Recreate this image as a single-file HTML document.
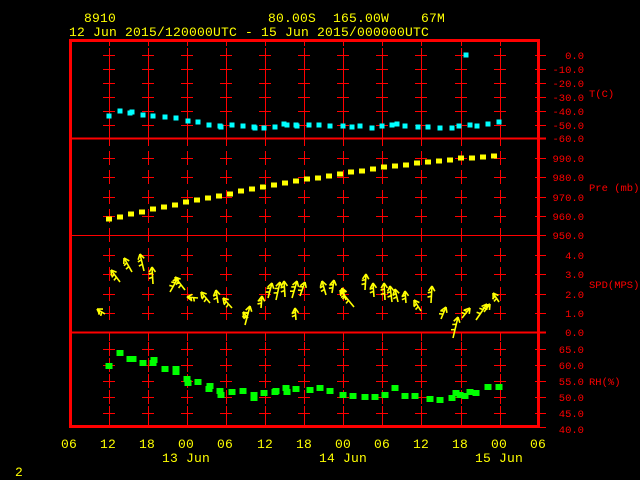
<!DOCTYPE html>
<html><head><meta charset="utf-8"><style>
html,body{margin:0;padding:0;background:#000;}
svg{display:block}
.y{fill:#ffff00;font-family:"Liberation Mono",monospace;font-size:13px;letter-spacing:0.2px}
.r{fill:#ff0000;font-family:"Liberation Mono",monospace;font-size:10.5px}
</style></head><body>
<svg id="s" width="640" height="480" viewBox="0 0 640 480" xmlns="http://www.w3.org/2000/svg">
<rect width="640" height="480" fill="#000"/>
<text class="y" x="84" y="22">8910</text>
<text class="y" x="268" y="22">80.00S</text>
<text class="y" x="333" y="22">165.00W</text>
<text class="y" x="421" y="22">67M</text>
<text class="y" x="69" y="36">12 Jun 2015/120000UTC - 15 Jun 2015/000000UTC</text>
<g id="grid" stroke="#ff0000" stroke-width="1" shape-rendering="crispEdges"></g>
<g fill="none" stroke="#ff0000" shape-rendering="crispEdges">
<rect x="70.5" y="40.5" width="468" height="386" stroke-width="3"/>
<line x1="70" y1="138.5" x2="546" y2="138.5" stroke-width="2"/>
<line x1="70" y1="235.5" x2="546" y2="235.5" stroke-width="1"/>
<line x1="70" y1="332.5" x2="546" y2="332.5" stroke-width="2"/>
</g>
<g text-anchor="end">
<text class="r" x="584" y="59">0.0</text>
<text class="r" x="584" y="73">-10.0</text>
<text class="r" x="584" y="87">-20.0</text>
<text class="r" x="584" y="101">-30.0</text>
<text class="r" x="584" y="115">-40.0</text>
<text class="r" x="584" y="129">-50.0</text>
<text class="r" x="584" y="142">-60.0</text>
<text class="r" x="584" y="162">990.0</text>
<text class="r" x="584" y="181">980.0</text>
<text class="r" x="584" y="201">970.0</text>
<text class="r" x="584" y="220">960.0</text>
<text class="r" x="584" y="239">950.0</text>
<text class="r" x="584" y="259">4.0</text>
<text class="r" x="584" y="278">3.0</text>
<text class="r" x="584" y="298">2.0</text>
<text class="r" x="584" y="317">1.0</text>
<text class="r" x="584" y="336">0.0</text>
<text class="r" x="584" y="353">65.0</text>
<text class="r" x="584" y="369">60.0</text>
<text class="r" x="584" y="385">55.0</text>
<text class="r" x="584" y="401">50.0</text>
<text class="r" x="584" y="417">45.0</text>
<text class="r" x="584" y="433">40.0</text>
</g>
<text class="r" x="589" y="97">T(C)</text>
<text class="r" x="589" y="191">Pre (mb)</text>
<text class="r" x="589" y="288">SPD(MPS)</text>
<text class="r" x="589" y="385">RH(%)</text>
<g text-anchor="middle">
<text class="y" x="69" y="448">06</text>
<text class="y" x="108" y="448">12</text>
<text class="y" x="147" y="448">18</text>
<text class="y" x="186" y="448">00</text>
<text class="y" x="225" y="448">06</text>
<text class="y" x="265" y="448">12</text>
<text class="y" x="304" y="448">18</text>
<text class="y" x="343" y="448">00</text>
<text class="y" x="382" y="448">06</text>
<text class="y" x="421" y="448">12</text>
<text class="y" x="460" y="448">18</text>
<text class="y" x="499" y="448">00</text>
<text class="y" x="538" y="448">06</text>
<text class="y" x="186" y="462">13 Jun</text>
<text class="y" x="343" y="462">14 Jun</text>
<text class="y" x="499" y="462">15 Jun</text>
</g>
<text class="y" x="15" y="476">2</text>
<g id="data" shape-rendering="crispEdges"></g>
<g id="wind" stroke="#ffff00" stroke-width="1.6" fill="none"></g>
</svg>
<script>
var NS="http://www.w3.org/2000/svg";
function el(p,t,a){var e=document.createElementNS(NS,t);for(var k in a)e.setAttribute(k,a[k]);p.appendChild(e);return e;}
var g=document.getElementById('grid');
var xs=[];for(var i=1;i<12;i++)xs.push(Math.round(69.5+i*39.1));
var rows=[55,69,83,97,111,125,158,177,197,216,235,255,274,294,313,349,365,381,397,413];
xs.forEach(function(x){
 rows.forEach(function(y){el(g,'line',{x1:x-6,y1:y+.5,x2:x+6,y2:y+.5});el(g,'line',{x1:x+.5,y1:y-7,x2:x+.5,y2:y+7});});
 [[118,138],[332,341],[41,46],[420,427],[138,146]].forEach(function(s){el(g,'line',{x1:x+.5,y1:s[0],x2:x+.5,y2:s[1]});});
});
[55,69,83,97,111,125,138,158,177,197,216,235,255,274,294,313,332,349,365,381,397,413,427].forEach(function(y){el(g,'line',{x1:535,y1:y+.5,x2:546,y2:y+.5});});
var d=document.getElementById('data');
function pts(arr,c,w,h){arr.forEach(function(p){el(d,'rect',{x:p[0]-w/2,y:p[1]-h/2,width:w,height:h,fill:c});});}
pts([[109,116],[120,111],[130,113],[132,112],[143,115],[153,116],[165,117],[176,118],[188,121],[198,122],[209,125],[220,126],[221,127],[232,125],[243,126],[254,127],[255,128],[264,128],[275,127],[284,124],[287,125],[296,125],[297,126],[309,125],[319,125],[330,126],[343,126],[352,127],[360,126],[372,128],[382,126],[392,125],[397,124],[405,126],[418,127],[428,127],[440,128],[452,128],[459,126],[466,55],[470,125],[477,126],[488,124],[499,122]],'#00ffff',5,5);
var pr=[];for(var x=109;x<=500;x+=11){var t=(x-109)/391;var y=219-63*(1-Math.pow(1-t,1.4));pr.push([x,Math.round(y)]);}
pts(pr,'#ffff00',6,5);
pts([[109,366],[120,353],[130,359],[133,359],[143,363],[153,363],[154,360],[165,369],[176,369],[176,372],[187,379],[188,383],[198,382],[209,389],[210,386],[220,391],[221,395],[232,392],[243,391],[254,395],[254,398],[264,393],[275,392],[276,391],[286,388],[287,392],[296,389],[310,390],[320,388],[330,391],[343,395],[353,396],[365,397],[375,397],[385,395],[395,388],[405,396],[415,396],[430,399],[440,400],[452,398],[456,393],[460,395],[465,396],[470,392],[476,393],[488,387],[499,387]],'#00ff00',7,6);
var w=document.getElementById('wind');
var A=[[105,314,97,309],[120,282,111,270],[132,272,124,258],[144,271,140,254],[153,284,152,267],[185,290,175,277],[170,292,178,278],[198,298,187,297],[210,303,201,292],[218,303,216,290],[232,308,223,298],[245,325,250,306],[248,318,243,312],[261,308,262,296],[268,298,272,283],[276,300,280,282],[285,297,284,281],[292,298,297,281],[300,296,305,282],[296,320,295,308],[326,295,322,281],[332,293,334,280],[354,307,340,290],[346,300,342,288],[365,290,366,274],[374,297,373,283],[385,300,384,283],[392,302,390,286],[398,302,395,289],[406,303,405,291],[421,311,414,300],[431,303,432,286],[441,319,446,307],[453,338,458,317],[462,318,470,308],[476,320,487,304],[484,312,490,304],[499,302,493,293]];
A.forEach(function(a){
 var tx=a[0],ty=a[1],hx=a[2],hy=a[3];
 el(w,'line',{x1:tx,y1:ty,x2:hx,y2:hy});
 var ang=Math.atan2(ty-hy,tx-hx);
 [0.55,-0.55].forEach(function(o){el(w,'line',{x1:hx,y1:hy,x2:hx+6*Math.cos(ang+o),y2:hy+6*Math.sin(ang+o)});});
 [0.35,0.6].forEach(function(f){var mx=hx+(tx-hx)*f,my=hy+(ty-hy)*f;
 el(w,'line',{x1:mx,y1:my,x2:mx+4*Math.cos(ang+1.3),y2:my+4*Math.sin(ang+1.3)});});
});
</script>
</body></html>
